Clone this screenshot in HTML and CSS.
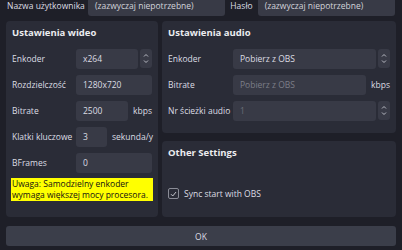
FILE: index.html
```html
<!DOCTYPE html>
<html lang="pl">
<head>
<meta charset="utf-8">
<link rel="stylesheet" href="styles.css">
</head>
<body>
<div class="top">
  <span class="lbl user-lbl">Nazwa użytkownika</span>
  <div class="input user">(zazwyczaj niepotrzebne)</div>
  <span class="lbl pass-lbl">Hasło</span>
  <div class="input pass">(zazwyczaj niepotrzebne)</div>
</div>
<div class="main">
  <section class="panel video">
    <h2 class="title">Ustawienia wideo</h2>
    <div class="form form-video">
      <span class="lbl">Enkoder</span>
      <div class="combo">
        <div class="input">x264</div>
        <div class="spin"><svg viewBox="0 0 12 19" width="12" height="19"><path d="M4 7.5 L6 5.5 L8 7.5 M4 11.5 L6 13.5 L8 11.5" fill="none" stroke="#b9bbc4" stroke-width="1"/></svg></div>
      </div>
      <span class="lbl">Rozdzielczość</span>
      <div class="input">1280x720</div>
      <span class="lbl">Bitrate</span>
      <div class="withunit"><div class="input">2500</div><span class="unit">kbps</span></div>
      <span class="lbl">Klatki kluczowe</span>
      <div class="withunit"><div class="input short">3</div><span class="unit">sekunda/y</span></div>
      <span class="lbl">BFrames</span>
      <div class="input">0</div>
    </div>
    <div class="warn">Uwaga: Samodzielny enkoder<br>wymaga większej mocy procesora.</div>
  </section>
  <div class="rightcol">
    <section class="panel audio">
      <h2 class="title">Ustawienia audio</h2>
      <div class="form form-audio">
        <span class="lbl">Enkoder</span>
        <div class="combo">
          <div class="input">Pobierz z OBS</div>
          <div class="spin"><svg viewBox="0 0 12 19" width="12" height="19"><path d="M4 7.5 L6 5.5 L8 7.5 M4 11.5 L6 13.5 L8 11.5" fill="none" stroke="#b9bbc4" stroke-width="1"/></svg></div>
        </div>
        <span class="lbl">Bitrate</span>
        <div class="withunit"><div class="input placeholder">Pobierz z OBS</div><span class="unit">kbps</span></div>
        <span class="lbl">Nr ścieżki audio</span>
        <div class="combo">
          <div class="input disabled">1</div>
          <div class="spin"><svg viewBox="0 0 12 19" width="12" height="19"><path d="M4 7.5 L6 5.5 L8 7.5 M4 11.5 L6 13.5 L8 11.5" fill="none" stroke="#b9bbc4" stroke-width="1"/></svg></div>
        </div>
      </div>
    </section>
    <section class="panel other">
      <h2 class="title">Other Settings</h2>
      <label class="check">
        <span class="box"><svg viewBox="0 0 10 10" width="10" height="10"><path d="M2.2 5.2 L4.2 7.2 L7.8 2.8" fill="none" stroke="#d6d7dd" stroke-width="1"/></svg></span>
        <span>Sync start with OBS</span>
      </label>
    </section>
  </div>
</div>
<div class="bottom"><button class="ok">OK</button></div>
</body>
</html>
```
FILE: styles.css
```css
html, body {
  margin: 0;
  padding: 0;
}
body {
  width: 402px;
  height: 250px;
  overflow: hidden;
  background: #1e1f28;
  color: #dcdde3;
  font-family: "Open Sans", "Noto Sans", sans-serif;
  font-size: 8.5px;
  line-height: 10px;
}
.top {
  display: flex;
  align-items: center;
  height: 20px;
  margin-top: -4px;
  padding: 0 7px;
}
.user-lbl { width: 81px; }
.pass-lbl { margin: 0 5px; }
.input {
  box-sizing: border-box;
  height: 20px;
  background: #383a46;
  border-radius: 3px;
  padding: 0 7px;
  display: flex;
  align-items: center;
  white-space: nowrap;
  overflow: hidden;
}
.top .input {
  flex: 1;
  color: #d2d3da;
}
.main {
  display: grid;
  grid-template-columns: 152px 234px;
  column-gap: 4px;
  margin: 5px 6px 0;
  height: 196px;
}
.panel {
  background: #2a2c37;
  border-radius: 4px;
  padding: 0 6px;
}
.title {
  margin: 0;
  box-sizing: border-box;
  height: 28px;
  padding-top: 7px;
  font-size: 9.5px;
  line-height: 10px;
  font-weight: bold;
  color: #ececf0;
}
.form {
  display: grid;
  grid-auto-rows: 20px;
  row-gap: 6px;
  align-items: center;
}
.form-video { grid-template-columns: 64px 76px; }
.form-audio { grid-template-columns: 65px 157px; }
.combo {
  display: flex;
  gap: 2px;
  height: 20px;
}
.combo .input { flex: 1; }
.spin {
  width: 12px;
  height: 19px;
  background: #383a46;
  border-radius: 3px;
}
.spin svg { display: block; }
.withunit {
  display: flex;
  align-items: center;
  gap: 5px;
}
.withunit .input { flex: 1; }
.withunit .input.short { flex: 0 0 31px; }
.unit { white-space: nowrap; }
.placeholder { color: #7c7e88; }
.disabled { color: #6c6e78; }
.warn {
  margin: 5px -1px 0;
  background: #ffff00;
  color: #111;
  padding: 1px 1px;
  line-height: 10.5px;
}
.rightcol {
  display: flex;
  flex-direction: column;
  gap: 8px;
}
.audio { height: 112px; box-sizing: border-box; }
.other { flex: 1; }
.check {
  display: flex;
  align-items: center;
  gap: 5px;
  margin-top: 19px;
}
.box {
  box-sizing: border-box;
  width: 11px;
  height: 11px;
  border: 1px solid #8a8c96;
  border-radius: 2px;
  display: flex;
  align-items: center;
  justify-content: center;
}
.box svg { display: block; }
.bottom {
  padding: 9px 6px 0;
}
.ok {
  display: block;
  width: 100%;
  height: 20px;
  border: none;
  border-radius: 3px;
  background: #3b3e4a;
  color: #dcdde3;
  font-family: "Open Sans", "Noto Sans", sans-serif;
  font-size: 8.5px;
  padding: 0;
}
```
